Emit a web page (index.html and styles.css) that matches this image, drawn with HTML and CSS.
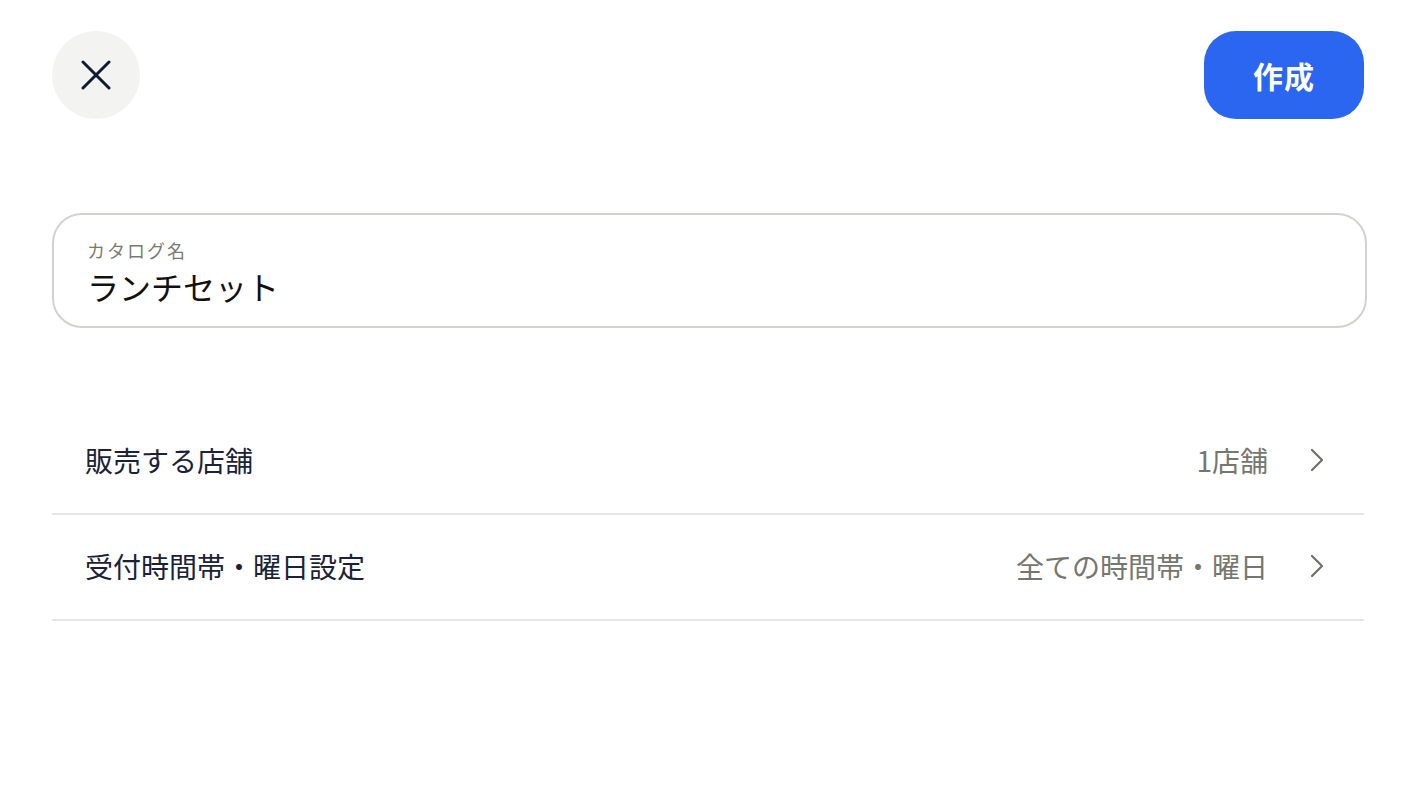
FILE: index.html
```html
<!DOCTYPE html>
<html lang="ja">
<head>
<meta charset="utf-8">
<link rel="stylesheet" href="styles.css">
</head>
<body>
<div class="page">
  <header class="topbar">
    <button class="close-btn" aria-label="閉じる">
      <svg width="30" height="30" viewBox="0 0 30 30"><path d="M2 2 L28 28 M28 2 L2 28" stroke="#111a33" stroke-width="3" stroke-linecap="round" fill="none"/></svg>
    </button>
    <button class="create-btn">作成</button>
  </header>

  <div class="field">
    <div class="field-label">カタログ名</div>
    <div class="field-value">ランチセット</div>
  </div>

  <ul class="list">
    <li class="row">
      <span class="row-title">販売する店舗</span>
      <span class="row-value">1店舗</span>
      <svg class="chev" width="14" height="24" viewBox="0 0 14 24"><path d="M2 2 L12 12 L2 22" stroke="#6f6f69" stroke-width="2.2" stroke-linecap="round" stroke-linejoin="round" fill="none"/></svg>
    </li>
    <li class="row">
      <span class="row-title">受付時間帯・曜日設定</span>
      <span class="row-value">全ての時間帯・曜日</span>
      <svg class="chev" width="14" height="24" viewBox="0 0 14 24"><path d="M2 2 L12 12 L2 22" stroke="#6f6f69" stroke-width="2.2" stroke-linecap="round" stroke-linejoin="round" fill="none"/></svg>
    </li>
  </ul>
</div>
</body>
</html>
```

FILE: styles.css
```css
* { box-sizing: border-box; }
html, body { margin: 0; padding: 0; background: #ffffff; }
body {
  font-family: "Noto Sans CJK JP", "Noto Sans", sans-serif;
  color: #111a33;
}
.page {
  padding: 31px 42px 0 52px;
}
.topbar {
  display: flex;
  justify-content: space-between;
  align-items: center;
  height: 88px;
}
.close-btn {
  width: 88px;
  height: 88px;
  border-radius: 50%;
  border: none;
  background: #f3f3f1;
  display: flex;
  align-items: center;
  justify-content: center;
  padding: 0;
}
.create-btn {
  width: 160px;
  height: 88px;
  border-radius: 32px;
  border: none;
  background: #2b66f1;
  color: #ffffff;
  font-family: "Noto Sans CJK JP", sans-serif;
  font-size: 30px;
  font-weight: 700;
  padding: 0;
  letter-spacing: 1px;
}
.field {
  margin-top: 94px;
  margin-right: -3px;
  height: 115px;
  border: 2px solid #d2d2cf;
  border-radius: 30px;
  padding: 22px 0 0 33px;
}
.field-label {
  font-size: 18px;
  line-height: 26px;
  letter-spacing: 2px;
  color: #7a7a74;
}
.field-value {
  font-size: 32px;
  line-height: 44px;
  color: #111111;
  margin-top: 1px;
}
.list {
  list-style: none;
  margin: 81px 0 0 0;
  padding: 0;
}
.row {
  display: flex;
  align-items: center;
  height: 106px;
  border-bottom: 2px solid #e6e6e5;
  padding: 0 40px 2px 33px;
}
.row-title {
  flex: 1;
  font-size: 28px;
  color: #1a2238;
}
.row-value {
  font-size: 28px;
  color: #76766f;
  margin-right: 42px;
}
.chev { display: block; }
```
